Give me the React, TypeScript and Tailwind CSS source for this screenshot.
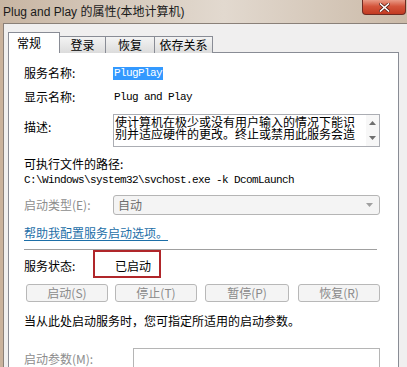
import React from 'react';

const TABS = [
  { label: '登录', w: 'w-[46px]' },
  { label: '恢复', w: 'w-[49px]' },
  { label: '依存关系', w: 'w-[58px]' },
];

const BUTTONS = [
  { label: '启动(S)', ml: 'ml-[2px]', w: 'w-[82px]' },
  { label: '停止(T)', ml: 'ml-[7px]', w: 'w-[82px]' },
  { label: '暂停(P)', ml: 'ml-[8px]', w: 'w-[84px]' },
  { label: '恢复(R)', ml: 'ml-[9px]', w: 'w-[82px]' },
];

const App: React.FC = () => {
  return (
    <div className="w-[407px] h-[367px] overflow-hidden flex flex-col bg-[#c9b29c] font-['Noto_Sans_CJK_SC',sans-serif] text-[12px] text-black">
      {/* title bar */}
      <div className="relative h-[23px] shrink-0 flex items-center pl-[3px] bg-[linear-gradient(90deg,#c8b5a2_0%,#d6cabd_30%,#e2d9cf_55%,#cbbaa8_100%)]">
        <span className="font-['Liberation_Sans','Noto_Sans_CJK_SC',sans-serif] text-[12px] leading-none text-[#1a1a1a]">
          Plug and Play 的属性(本地计算机)
        </span>
        <div className="absolute right-[1px] top-0 w-[44px] h-[15px] rounded-b-[4px] border border-t-0 border-[#6e2a22] bg-[linear-gradient(180deg,#e99a86_0%,#d4553c_45%,#c23a22_100%)] flex items-center justify-center">
          <svg width="11" height="9" viewBox="0 0 11 9">
            <path d="M1.5 1 L9.5 8 M9.5 1 L1.5 8" stroke="#5a1d15" strokeWidth="3" strokeLinecap="square" />
            <path d="M1.5 1 L9.5 8 M9.5 1 L1.5 8" stroke="#ffffff" strokeWidth="1.6" strokeLinecap="square" />
          </svg>
        </div>
      </div>

      {/* dialog body */}
      <div className="flex-1 ml-[3px] border-t border-l border-[#8a8078] bg-[#f0efef] pl-[4px] pt-[8px]">
        {/* tabs */}
        <div className="flex items-end h-[21px] relative z-10">
          <div className="w-[52px] h-[21px] bg-white border border-b-0 border-[#898c95] pl-[8px] pt-[2px] leading-[16px]">
            常规
          </div>
          {TABS.map((t) => (
            <div
              key={t.label}
              className={`${t.w} h-[17px] border border-l-0 border-b-0 border-[#898c95] bg-[linear-gradient(180deg,#f3f3f3_0%,#e8e8e8_50%,#dcdcdc_100%)] text-center leading-[16px]`}
            >
              {t.label}
            </div>
          ))}
        </div>

        {/* panel */}
        <div className="w-[391px] h-[400px] -mt-[1px] bg-white border border-[#898c95] pl-[15px] pr-[18px] flex flex-col">
          <div className="mt-[12px] h-[16px] flex items-center">
            <span className="w-[89px]">服务名称:</span>
            <span className="bg-[#3399ff] text-white font-['Liberation_Mono',monospace] text-[11px] tracking-[-0.6px] leading-[13px] px-[1px]">
              PlugPlay
            </span>
          </div>

          <div className="mt-[8px] h-[16px] flex items-center">
            <span className="w-[89px]">显示名称:</span>
            <span className="font-['Liberation_Mono',monospace] text-[11px] tracking-[-0.6px] pl-[1px]">Plug and Play</span>
          </div>

          <div className="mt-[9px] flex items-start">
            <span className="w-[89px] mt-[5px] leading-[16px]">描述:</span>
            <div className="w-[267px] h-[33px] border border-[#abadb3] flex">
              <div className="flex-1 text-[12px] leading-[12px] pl-[1px] pt-[1px] overflow-hidden">
                使计算机在极少或没有用户输入的情况下能识别并适应硬件的更改。终止或禁用此服务会造
              </div>
              <div className="w-[13px] flex flex-col items-center justify-between py-[6px] bg-[#f7f7f7]">
                <svg width="7" height="4" viewBox="0 0 7 4"><path d="M0 4 L3.5 0 L7 4 Z" fill="#6f6f6f" /></svg>
                <svg width="7" height="4" viewBox="0 0 7 4"><path d="M0 0 L3.5 4 L7 0 Z" fill="#6f6f6f" /></svg>
              </div>
            </div>
          </div>

          <div className="mt-[9px] h-[16px] leading-[16px]">可执行文件的路径:</div>
          <div className="h-[16px] leading-[16px] font-['Liberation_Mono',monospace] text-[11px] tracking-[-0.6px]">
            C:\Windows\system32\svchost.exe -k DcomLaunch
          </div>

          <div className="mt-[7px] flex items-center">
            <span className="w-[89px] text-[#8d8d8d]">启动类型(E):</span>
            <div className="w-[267px] h-[20px] rounded-[3px] border border-[#b5b5b5] bg-[#f4f4f4] flex items-center justify-between pl-[4px] pr-[6px] text-[#6d6d6d]">
              <span>自动</span>
              <svg width="7" height="4" viewBox="0 0 7 4"><path d="M0 0 L3.5 4 L7 0 Z" fill="#a0a0a0" /></svg>
            </div>
          </div>

          <div className="mt-[10px] h-[16px] leading-[16px]">
            <span className="text-[#1d6fa8] underline underline-offset-[2px]">帮助我配置服务启动选项。</span>
          </div>

          <div className="mt-[8px] w-[353px] h-px bg-[#a0a0a0]" />

          <div className="flex items-start">
            <span className="w-[69px] mt-[8px] leading-[16px]">服务状态:</span>
            <div className="w-[68px] h-[28px] border-2 border-[#b0262a] pl-[20px] pt-[6px] leading-[16px]">已启动</div>
          </div>

          <div className="mt-[6px] flex">
            {BUTTONS.map((b) => (
              <div
                key={b.label}
                className={`${b.ml} ${b.w} h-[18px] rounded-[3px] border border-[#b8b8b8] bg-[#f4f4f4] flex items-center justify-center text-[#8a8a8a] leading-none`}
              >
                {b.label}
              </div>
            ))}
          </div>

          <div className="mt-[11px] h-[16px] leading-[16px]">当从此处启动服务时，您可指定所适用的启动参数。</div>

          <div className="mt-[19px] flex items-start">
            <span className="w-[109px] mt-[3px] leading-[16px] text-[#8d8d8d]">启动参数(M):</span>
            <div className="w-[247px] h-[26px] border border-[#b5b5b5] bg-white" />
          </div>
        </div>
      </div>
    </div>
  );
};

export default App;
